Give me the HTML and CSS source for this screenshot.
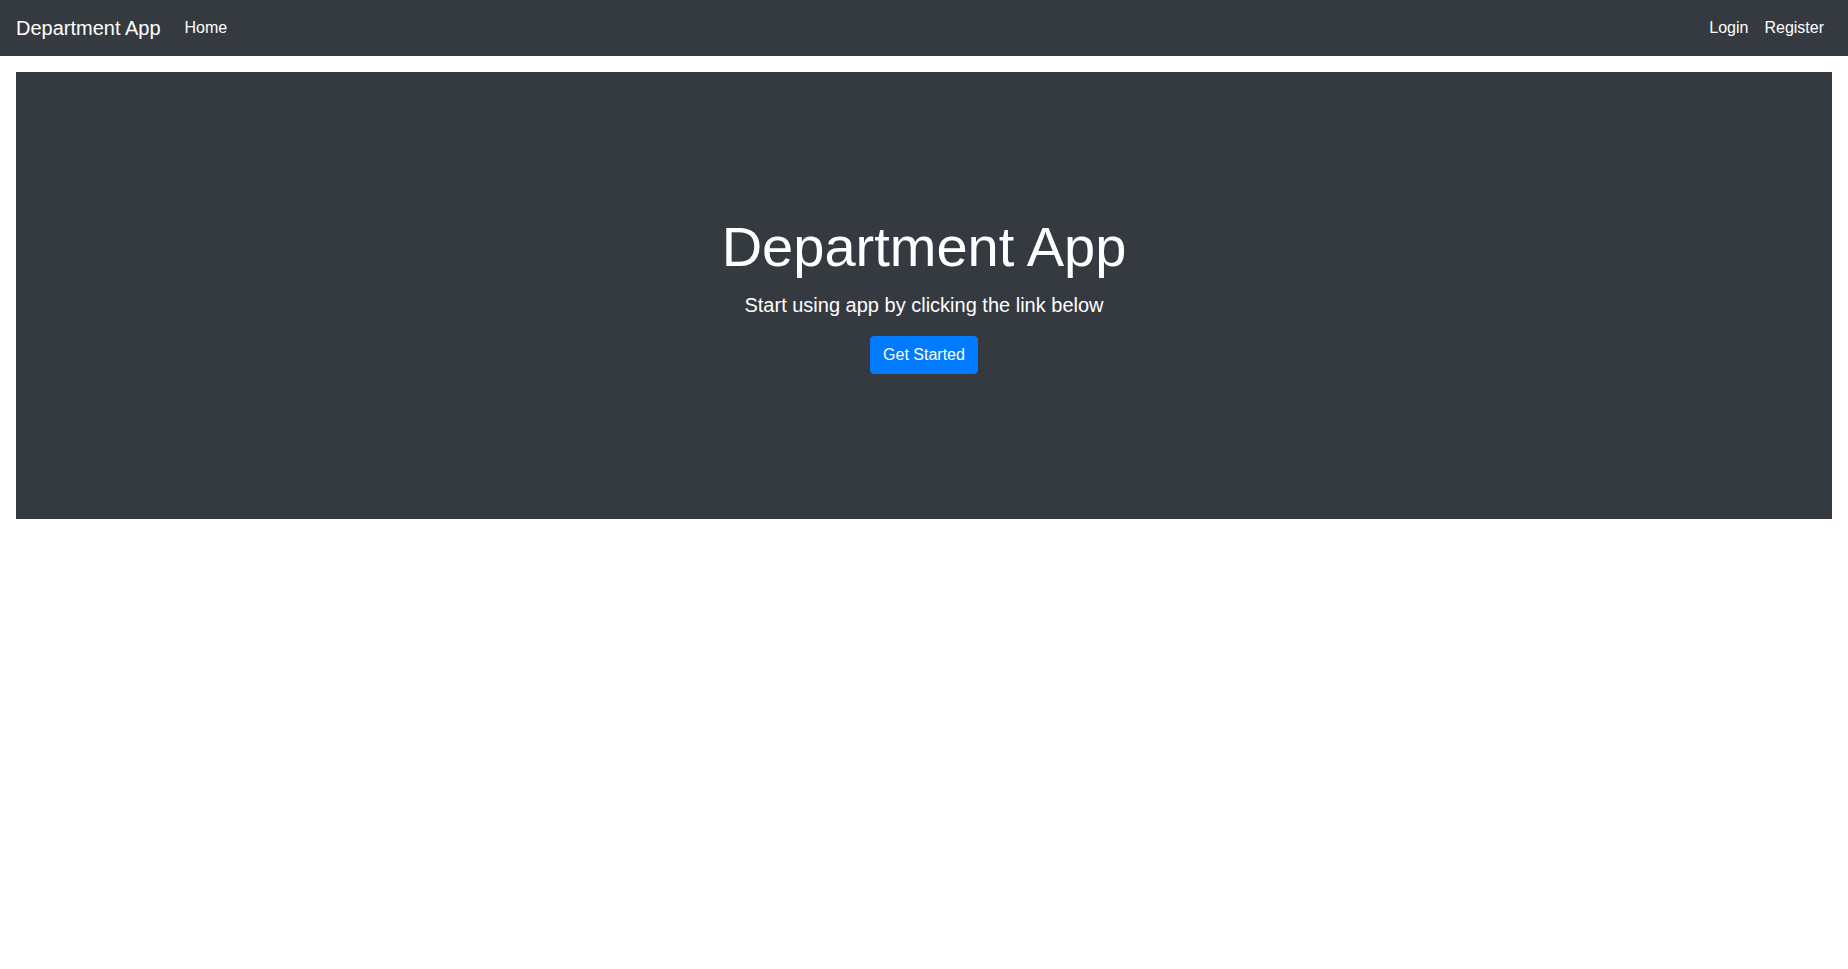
FILE: index.html
```
<!DOCTYPE html>
<html lang="en">
<head>
<meta charset="utf-8">
<title>Department App</title>
<link rel="stylesheet" href="styles.css">
</head>
<body>
<nav class="navbar">
  <a class="brand" href="#">Department App</a>
  <ul class="nav nav-left">
    <li><a class="nav-link" href="#">Home</a></li>
  </ul>
  <ul class="nav nav-right">
    <li><a class="nav-link" href="#">Login</a></li>
    <li><a class="nav-link" href="#">Register</a></li>
  </ul>
</nav>
<main class="page">
  <section class="hero">
    <h1 class="hero-title">Department App</h1>
    <p class="lead">Start using app by clicking the link below</p>
    <a class="btn" href="#">Get Started</a>
  </section>
</main>
</body>
</html>
```
FILE: styles.css
```
* { box-sizing: border-box; }
html, body { margin: 0; padding: 0; }
body {
  font-family: "Liberation Sans", Arial, sans-serif;
  font-size: 16px;
  line-height: 1.5;
  color: #212529;
  background: #fff;
}
a { text-decoration: none; }
.navbar {
  display: flex;
  align-items: center;
  height: 56px;
  padding: 8px 16px;
  background: #343a40;
}
.brand {
  color: #fff;
  font-size: 20px;
  line-height: 30px;
  padding: 5px 0;
  margin-right: 16px;
}
.nav {
  list-style: none;
  margin: 0;
  padding: 0;
  display: flex;
}
.nav-right { margin-left: auto; }
.nav-link {
  display: block;
  color: #fff;
  padding: 8px;
  line-height: 24px;
}
.page { padding: 16px; }
.hero {
  height: 447px;
  background: #343a40;
  color: #fff;
  display: flex;
  flex-direction: column;
  align-items: center;
  justify-content: center;
  text-align: center;
  padding-bottom: 4px;
}
.hero-title {
  font-size: 56px;
  font-weight: 400;
  line-height: 1.2;
  margin: 0 0 10px;
}
.lead {
  font-size: 20px;
  font-weight: 300;
  line-height: 30px;
  margin: 0 0 16px;
}
.btn {
  display: inline-block;
  background: #007bff;
  color: #fff;
  border: 1px solid #007bff;
  border-radius: 4px;
  padding: 6px 12px;
  font-size: 16px;
  line-height: 24px;
}
```
